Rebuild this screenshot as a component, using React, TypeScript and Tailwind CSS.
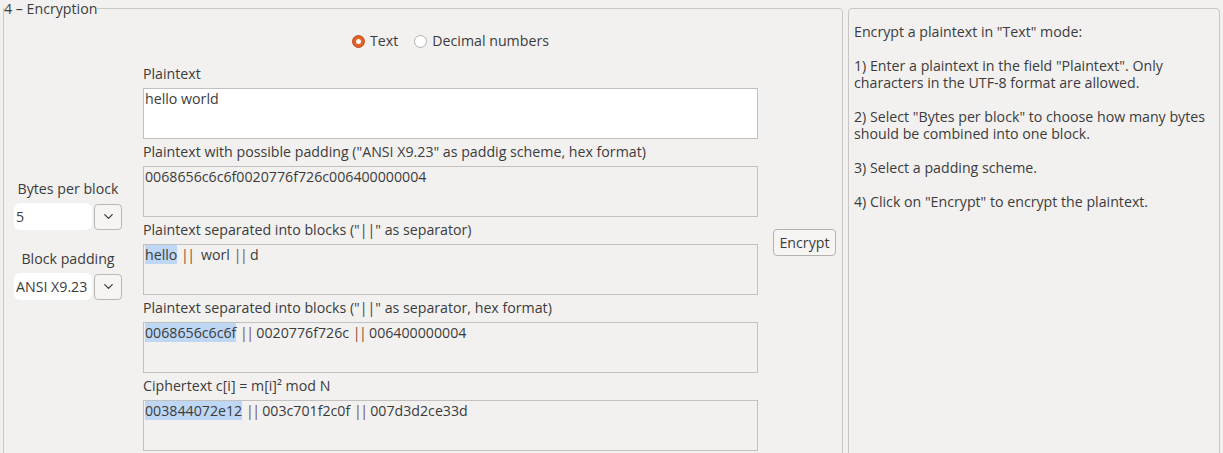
import React from "react";
import { ChevronDown } from "lucide-react";

const Sep = () => (
  <span className="text-[#7a5232]">
    {" "}
    <span className="tracking-[-1.5px]">||</span>{" "}
  </span>
);

const Hl: React.FC<{ children: React.ReactNode }> = ({ children }) => (
  <span className="bg-[#bed7f4]">{children}</span>
);

const Field: React.FC<{ label: string; white?: boolean; children?: React.ReactNode; first?: boolean }> = ({
  label,
  white,
  children,
  first,
}) => (
  <div className={first ? "mt-[13px]" : "mt-[3px]"}>
    <div className="h-[20px] leading-[20px] whitespace-nowrap">{label}</div>
    <div
      className={`mt-[4px] h-[51px] border border-[#c3c1bf] pl-[1px] pt-[1px] leading-[18px] whitespace-pre ${
        white ? "bg-white" : "bg-[#f2f1f0]"
      }`}
    >
      {children}
    </div>
  </div>
);

const Combo: React.FC<{ value: string }> = ({ value }) => (
  <div className="flex items-center gap-[2px] mt-[4px]">
    <div className="w-[79px] h-[27px] bg-white rounded-[6px] pl-[2px] leading-[27px] whitespace-nowrap overflow-hidden">
      {value}
    </div>
    <button className="w-[28px] h-[26px] rounded-[4px] border border-[#b8b6b3] bg-[#f6f5f4] flex items-center justify-center text-[#3c3c3c]">
      <ChevronDown size={15} strokeWidth={2} />
    </button>
  </div>
);

export default function App() {
  return (
    <div className="h-[453px] w-[1223px] overflow-hidden bg-[#f2f1f0] text-[#3c3c3c] text-[14.2px] font-['Open_Sans',sans-serif] flex gap-[5px] pl-[3px]">
      {/* Encryption group */}
      <fieldset className="w-[840px] h-[480px] shrink-0 m-0 p-0 min-w-0 border border-[#cbc9c7] rounded-tr-[4px]">
        <legend className="p-0 leading-[17px]">4 – Encryption</legend>
        <div className="flex pl-[10px]">
          {/* options column */}
          <div className="w-[108px] shrink-0 pt-[162px]">
            <div className="h-[20px] leading-[20px] text-center whitespace-nowrap">Bytes per block</div>
            <Combo value="5" />
            <div className="h-[20px] leading-[20px] text-center whitespace-nowrap mt-[19px]">Block padding</div>
            <Combo value="ANSI X9.23" />
          </div>

          {/* fields column */}
          <div className="w-[615px] shrink-0 ml-[21px]">
            <div className="mt-[14px] h-[20px] flex items-center justify-center">
              <div className="flex items-center gap-[5px]">
                <span className="w-[13px] h-[13px] rounded-full bg-[#e4612a] border border-[#c04e1d] flex items-center justify-center">
                  <span className="w-[5px] h-[5px] rounded-full bg-white" />
                </span>
                <span>Text</span>
              </div>
              <div className="flex items-center gap-[5px] ml-[16px]">
                <span className="w-[13px] h-[13px] rounded-full bg-white border border-[#b3b1ae]" />
                <span>Decimal numbers</span>
              </div>
            </div>

            <Field label="Plaintext" white first>
              hello world
            </Field>
            <Field label={'Plaintext with possible padding ("ANSI X9.23" as paddig scheme, hex format)'}>
              0068656c6c6f0020776f726c006400000004
            </Field>
            <Field label={'Plaintext separated into blocks ("||" as separator)'}>
              <Hl>hello</Hl>
              <Sep /> worl<Sep />d
            </Field>
            <Field label={'Plaintext separated into blocks ("||" as separator, hex format)'}>
              <Hl>0068656c6c6f</Hl>
              <Sep />0020776f726c<Sep />006400000004
            </Field>
            <Field label="Ciphertext c[i] = m[i]² mod N">
              <Hl>003844072e12</Hl>
              <Sep />003c701f2c0f<Sep />007d3d2ce33d
            </Field>
          </div>

          {/* action */}
          <div className="ml-[15px] pt-[212px]">
            <button className="h-[27px] w-[63px] rounded-[4px] border border-[#b5b3b0] bg-[#f6f5f4] leading-[25px] text-center">
              Encrypt
            </button>
          </div>
        </div>
      </fieldset>

      {/* Help panel */}
      <div className="mt-[8px] w-[372px] h-[480px] shrink-0 border border-[#c9c7c5] rounded-[4px] pl-[5px] pt-[14px] leading-[17px] whitespace-nowrap">
        <p>Encrypt a plaintext in "Text" mode:</p>
        <p className="mt-[17px]">1) Enter a plaintext in the field "Plaintext". Only</p>
        <p>characters in the UTF-8 format are allowed.</p>
        <p className="mt-[17px]">2) Select "Bytes per block" to choose how many bytes</p>
        <p>should be combined into one block.</p>
        <p className="mt-[17px]">3) Select a padding scheme.</p>
        <p className="mt-[17px]">4) Click on "Encrypt" to encrypt the plaintext.</p>
      </div>
    </div>
  );
}
